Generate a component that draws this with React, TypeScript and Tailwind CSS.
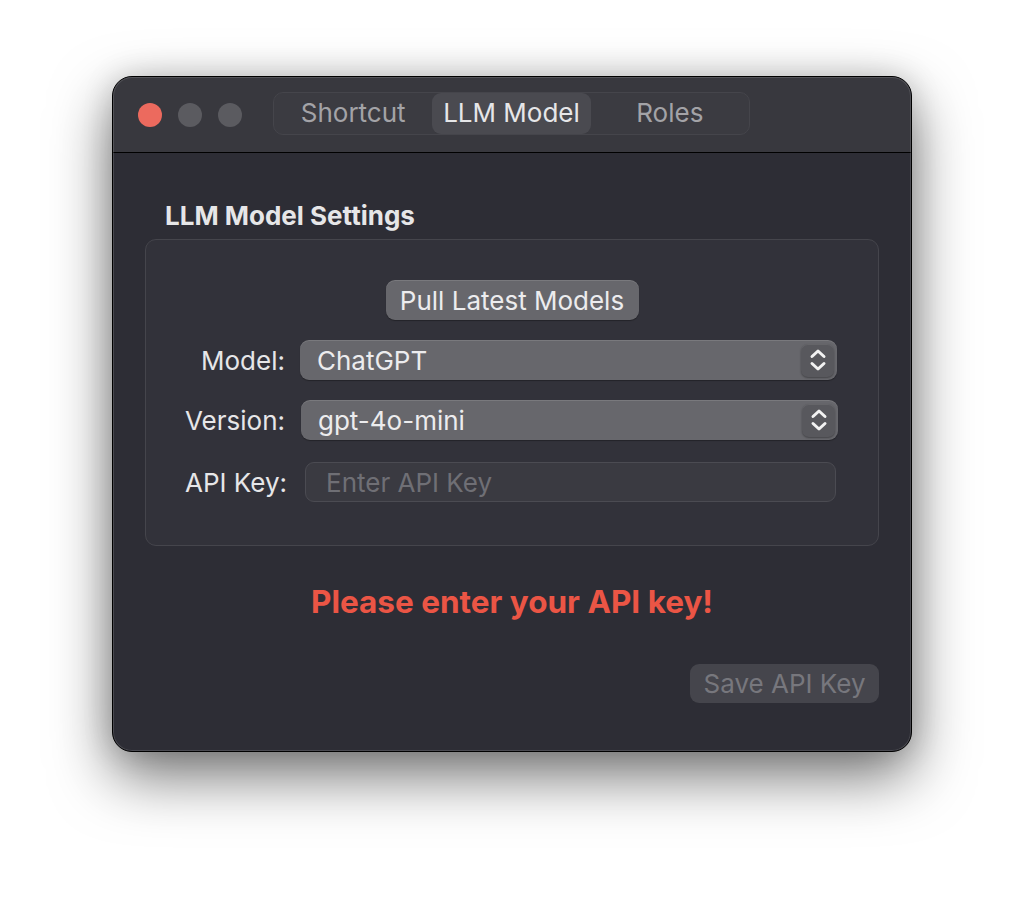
import React from 'react'

const font = { fontFamily: 'Inter, "Noto Sans", "Liberation Sans", sans-serif' }

function Stepper() {
  return (
    <div className="flex h-[33px] w-[33px] items-center justify-center rounded-[7px] bg-[#58585d] shadow-[0_1px_2px_rgba(0,0,0,0.35),inset_0_1px_0_rgba(255,255,255,0.08)]">
      <svg width="18" height="26" viewBox="0 0 18 26" fill="none">
        <path d="M3 9.5 L9 4 L15 9.5" stroke="#f2f2f2" strokeWidth="3" strokeLinecap="round" strokeLinejoin="round" />
        <path d="M3 16.5 L9 22 L15 16.5" stroke="#f2f2f2" strokeWidth="3" strokeLinecap="round" strokeLinejoin="round" />
      </svg>
    </div>
  )
}

function Select({ value }: { value: string }) {
  return (
    <div className="flex h-[40px] w-[537px] items-center justify-between rounded-[9px] bg-[#67676c] pl-[17px] pr-[3px] shadow-[inset_0_1px_0_rgba(255,255,255,0.12),0_1px_1px_rgba(0,0,0,0.3)]">
      <span className="text-[26px] text-[#ececee]">{value}</span>
      <Stepper />
    </div>
  )
}

export default function App() {
  const tabs = ['Shortcut', 'LLM Model', 'Roles']
  const active = 'LLM Model'

  return (
    <div className="h-[900px] w-[1024px] bg-white pl-[112px] pt-[76px]" style={font}>
      {/* Window */}
      <div className="relative flex h-[676px] w-[800px] flex-col overflow-hidden rounded-[20px] border border-black bg-[#2d2d35] shadow-[0_24px_60px_rgba(0,0,0,0.55),0_0_30px_rgba(0,0,0,0.15)]">
        {/* Title bar */}
        <div className="flex h-[76px] shrink-0 items-center border-b border-black bg-[#38383e] pl-[25px]">
          <div className="flex gap-[16px]">
            <div className="h-[24px] w-[24px] rounded-full bg-[#ec6a5e]" />
            <div className="h-[24px] w-[24px] rounded-full bg-[#5b5b60]" />
            <div className="h-[24px] w-[24px] rounded-full bg-[#5b5b60]" />
          </div>
          <div className="mb-[2px] ml-[31px] flex h-[43px] w-[477px] rounded-[10px] border border-[#45454b] bg-[#3b3b41]">
            {tabs.map((t) => (
              <div
                key={t}
                className={`flex flex-1 items-center justify-center rounded-[9px] pb-[2px] text-[26px] ${
                  t === active ? 'bg-[#4a4a50] text-[#e6e6e8]' : 'text-[#a3a3a7]'
                }`}
              >
                {t}
              </div>
            ))}
          </div>
        </div>

        {/* Content */}
        <div className="flex flex-1 flex-col px-[32px] pt-[47px]">
          <h2 className="pl-[20px] text-[26px] font-bold leading-[32px] text-[#e6e6e8]">LLM Model Settings</h2>

          <div className="mt-[7px] flex h-[307px] flex-col rounded-[11px] border border-[#45454c] bg-[#32323a] pt-[40px]">
            <div className="flex justify-center">
              <div className="flex h-[40px] w-[253px] items-center justify-center rounded-[9px] bg-[#67676c] text-[26px] text-[#ececee] shadow-[inset_0_1px_0_rgba(255,255,255,0.12),0_1px_1px_rgba(0,0,0,0.3)]">
                Pull Latest Models
              </div>
            </div>

            <div className="mt-[20px] flex items-center">
              <span className="w-[139px] text-right text-[26px] text-[#e6e6e8]">Model:</span>
              <div className="ml-[15px]">
                <Select value="ChatGPT" />
              </div>
            </div>

            <div className="mt-[20px] flex items-center">
              <span className="w-[139px] text-right text-[26px] text-[#e6e6e8]">Version:</span>
              <div className="ml-[16px]">
                <Select value="gpt-4o-mini" />
              </div>
            </div>

            <div className="mt-[22px] flex items-center">
              <span className="w-[141px] text-right text-[26px] text-[#e6e6e8]">API Key:</span>
              <div className="ml-[18px] flex h-[40px] w-[531px] items-center rounded-[9px] border border-[#4b4b52] bg-[#3a3a41] pl-[20px]">
                <span className="text-[26px] text-[#6f6f75]">Enter API Key</span>
              </div>
            </div>
          </div>

          <p className="mt-[36px] text-center text-[31.5px] font-bold leading-[40px] text-[#eb5545]">
            Please enter your API key!
          </p>

          <div className="mt-[42px] flex justify-end">
            <div className="flex h-[39px] w-[189px] items-center justify-center rounded-[9px] bg-[#45454c] text-[26px] text-[#77777d]">
              Save API Key
            </div>
          </div>
        </div>

        {/* inner highlight edge */}
        <div className="pointer-events-none absolute inset-0 rounded-[19px] shadow-[inset_0_0_0_1px_rgba(255,255,255,0.14)]" />
      </div>
    </div>
  )
}
